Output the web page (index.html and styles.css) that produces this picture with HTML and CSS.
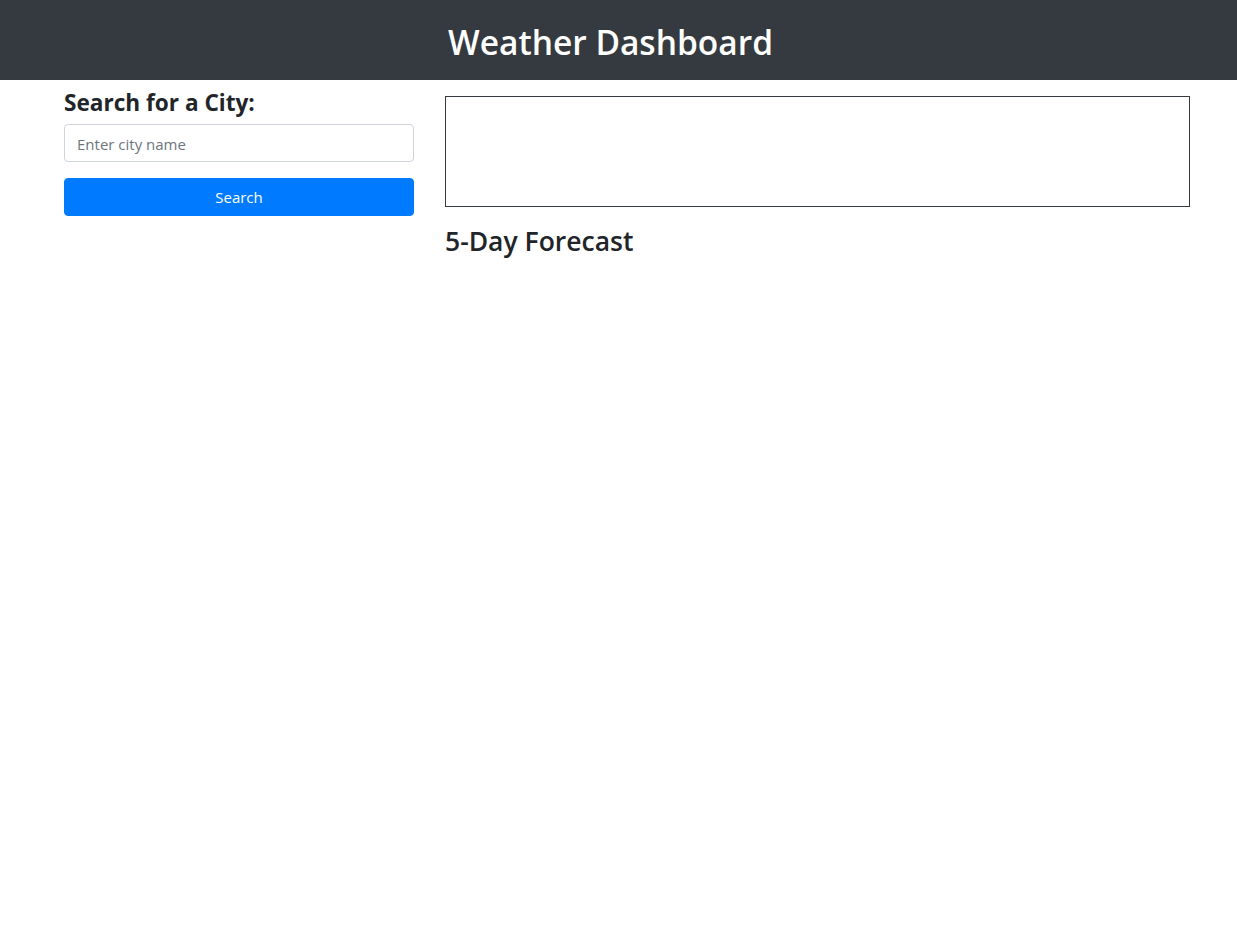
FILE: index.html
```html
<!DOCTYPE html>
<html lang="en">
<head>
<meta charset="utf-8">
<title>Weather Dashboard</title>
<link rel="stylesheet" href="styles.css">
</head>
<body>
<header class="topbar">
  <h1 class="topbar-title">Weather Dashboard</h1>
</header>
<main class="layout">
  <section class="sidebar">
    <h4 class="sidebar-title">Search for a City:</h4>
    <input class="city-input" type="text" placeholder="Enter city name">
    <button class="search-btn" type="button">Search</button>
  </section>
  <section class="content">
    <div class="current-box"></div>
    <h3 class="forecast-title">5-Day Forecast</h3>
  </section>
</main>
</body>
</html>
```
FILE: styles.css
```css
* { box-sizing: border-box; }
html, body {
  margin: 0;
  padding: 0;
  background: #fff;
  color: #212529;
  font-family: "Open Sans", "Noto Sans", Arial, sans-serif;
  font-size: 16px;
}
.topbar {
  height: 80px;
  padding-top: 4px;
  background: #343a40;
  display: flex;
  align-items: center;
  justify-content: center;
}
.topbar-title {
  margin: 0;
  color: #fff;
  font-size: 33.5px;
  font-weight: 600;
  line-height: normal;
  transform: translateX(-8px);
}
.layout {
  display: flex;
  gap: 31px;
  padding: 0 47px 0 64px;
}
.sidebar {
  width: 350px;
  flex: 0 0 350px;
  padding-top: 8px;
  display: flex;
  flex-direction: column;
}
.sidebar-title {
  margin: 0 0 7px;
  font-size: 22.6px;
  font-weight: 700;
  line-height: 29px;
  color: #212529;
}
.city-input {
  height: 38px;
  width: 100%;
  border: 1px solid #ced4da;
  border-radius: 4px;
  padding: 7px 12px 6px;
  font-family: inherit;
  font-size: 15px;
  color: #495057;
  margin-bottom: 16px;
  outline: none;
}
.city-input::placeholder { color: #6c757d; }
.search-btn {
  height: 38px;
  width: 100%;
  border: 1px solid #007bff;
  border-radius: 4px;
  background: #007bff;
  color: #fff;
  font-family: inherit;
  font-size: 15px;
  padding: 0;
  cursor: pointer;
}
.content {
  flex: 1 1 auto;
}
.current-box {
  margin-top: 16px;
  height: 111px;
  border: 1px solid #343a40;
}
.forecast-title {
  margin: 17px 0 0;
  font-size: 26.5px;
  font-weight: 600;
  line-height: 34px;
  color: #212529;
}
```
